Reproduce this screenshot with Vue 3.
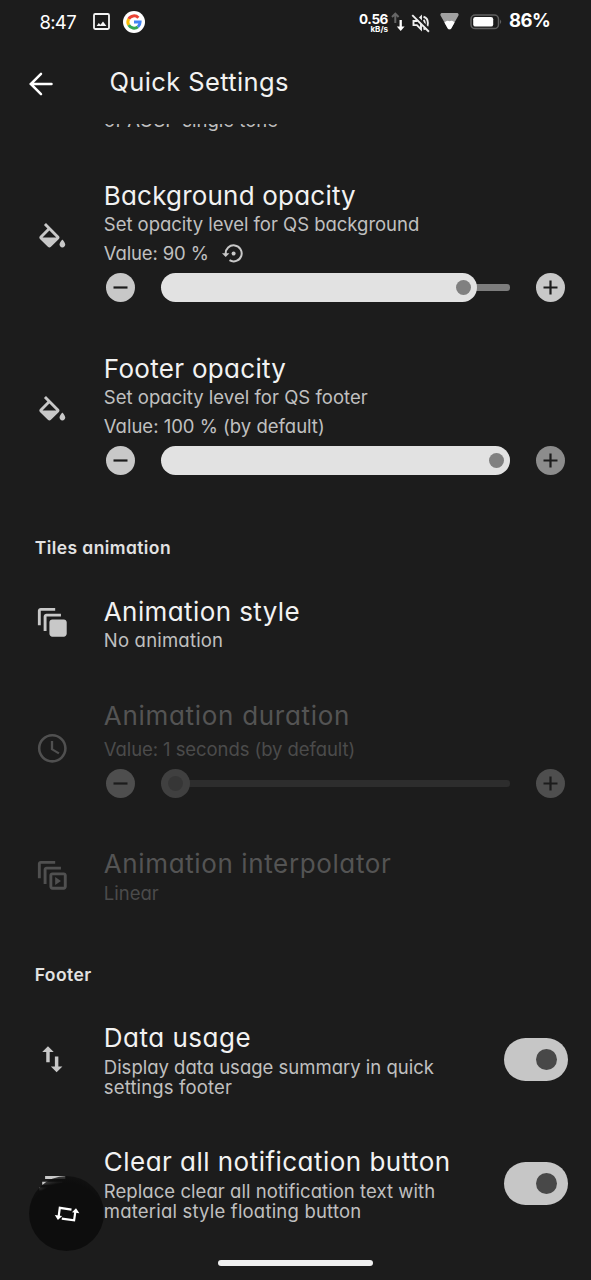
<script setup>
const icons = {
  fill: 'M16.56 8.94L7.62 0 6.21 1.41l2.38 2.38-5.15 5.15c-.59.59-.59 1.54 0 2.12l5.5 5.5c.29.29.68.44 1.06.44s.77-.15 1.06-.44l5.5-5.5c.59-.58.59-1.53 0-2.12zM5.21 10L10 5.21 14.79 10H5.21zM19 11.5s-2 2.17-2 3.5c0 1.1.9 2 2 2s2-.9 2-2c0-1.33-2-3.5-2-3.5z',
  layers: 'M14 2H4c-1.1 0-2 .9-2 2v10h2V4h10V2zm4 4H8c-1.1 0-2 .9-2 2v10h2V8h10V6zm2 4h-8c-1.1 0-2 .9-2 2v8c0 1.1.9 2 2 2h8c1.1 0 2-.9 2-2v-8c0-1.1-.9-2-2-2z',
  clock: 'M11.99 2C6.47 2 2 6.48 2 12s4.47 10 9.99 10C17.52 22 22 17.52 22 12S17.52 2 11.99 2zM12 20.2a8.2 8.2 0 1 1 0-16.4 8.2 8.2 0 0 1 0 16.400zM12.6 7h-1.600v6l5.200 3.200.8-1.300-4.400-2.600z',
  play: 'M14 2H4c-1.1 0-2 .9-2 2v10h2V4h10V2zm4 4H8c-1.1 0-2 .9-2 2v10h2V8h10V6zm2 4h-8c-1.1 0-2 .9-2 2v8c0 1.1.9 2 2 2h8c1.1 0 2-.9 2-2v-8c0-1.1-.9-2-2-2zm0 10h-8v-8h8v8zM14 13.2v5.6l4-2.8z',
  swap: 'M9 3L5 6.990h2.800V14h2.400V6.990H13L9 3zm7.200 14.010V10h-2.400v7.010H11L15 21l4-3.990z',
  clear: 'M5 13h14v-2H5v2zm-2 4h14v-2H3v2zM7 7v2h14V7H7z',
}
const rows = [
  { id: 'bg', icon: 'fill', title: 'Background opacity', lines: ['Set opacity level for QS background'], value: 'Value: 90 %', reset: true, fill: 316 },
  { id: 'foot', icon: 'fill', title: 'Footer opacity', lines: ['Set opacity level for QS footer'], value: 'Value: 100 % (by default)', fill: 349, max: true },
  { id: 'h1', heading: 'Tiles animation' },
  { id: 'style', icon: 'layers', title: 'Animation style', lines: ['No animation'] },
  { id: 'dur', icon: 'clock', title: 'Animation duration', lines: [], value: 'Value: 1 seconds (by default)', fill: 29, off: true },
  { id: 'interp', icon: 'play', title: 'Animation interpolator', lines: ['Linear'], off: true },
  { id: 'h2', heading: 'Footer' },
  { id: 'data', icon: 'swap', title: 'Data usage', lines: ['Display data usage summary in quick', 'settings footer'], toggle: true },
  { id: 'clear', icon: 'clear', title: 'Clear all notification button', lines: ['Replace clear all notification text with', 'material style floating button'], toggle: true },
]
</script>

<template>
  <div class="screen">
    <div class="status">
      <span class="time">8:47</span>
      <svg class="pic" viewBox="0 0 17 17"><rect x="1" y="1" width="15" height="15" rx="1.2" fill="none" stroke="#f4f4f4" stroke-width="1.8" /><path d="M3.600 13l2.200-3 1.700 1.700L10 8.600l3.400 4.400z" fill="#f4f4f4" /></svg>
      <svg class="goog" viewBox="0 0 22 22">
        <circle cx="11" cy="11" r="11" fill="#fff" />
        <g fill="none" stroke-width="3">
          <path d="M15.4 6.7A6.1 6.1 0 0 0 5.7 8" stroke="#ea4335" />
          <path d="M5.7 8a6.1 6.1 0 0 0 0 6.1" stroke="#fbbc05" />
          <path d="M5.7 14.1a6.1 6.1 0 0 0 9.2 1.7" stroke="#34a853" />
          <path d="M14.9 15.8a6.1 6.1 0 0 0 2.2-4.7H11" stroke="#4285f4" />
        </g>
      </svg>
      <div class="net"><b>0.56</b><small>kB/s</small></div>
      <svg class="arrows" viewBox="0 0 14 20"><path d="M4.300 11V2M1 5l3.300-3.400L7.600 5" fill="none" stroke="#666" stroke-width="2" /><path d="M9.700 8v9" fill="none" stroke="#fff" stroke-width="2.300" /><path d="M5.800 14.500h7.800l-3.900 4.500z" fill="#fff" /></svg>
      <svg class="mute" viewBox="0 0 24 24"><path d="M3 9.500h4l5-5v15l-5-5H3z M15 8.500c2 1.500 2 5.500 0 7 M15 4.500c7 2 7 13 0 15" fill="none" stroke="#eee" stroke-width="2.300" /><path d="M3.500 1.500l19 19" stroke="#1c1c1c" stroke-width="3" /><path d="M1.500 2.500l20 20" stroke="#eee" stroke-width="2.300" /></svg>
      <svg class="wifi" viewBox="0 0 19 18" preserveAspectRatio="none">
        <path d="M1.500 0h16q1.800 1.200.8 3L11.200 16.300q-1.700 2-3.400 0L.7 3Q-.3 1.200 1.500 0z" fill="#a0a0a0" />
        <path d="M4.400 10Q7 7.200 9.500 8.800 12.500 7.200 14.600 10L11.200 16.300q-1.700 2-3.400 0z" fill="#fff" />
      </svg>
      <svg class="batt" viewBox="0 0 32 16"><rect x="1" y="1" width="27.500" height="13.600" rx="4.200" fill="none" stroke="#606060" stroke-width="1.500" /><rect x="3.200" y="3" width="20" height="9.600" rx="2.200" fill="#fff" /><path d="M30 5.500q2.400 2.300 0 4.600z" fill="#606060" /></svg>
      <b class="pct">86%</b>
    </div>
    <header>
      <svg class="back" viewBox="0 0 24 24"><path d="M22.500 12H2M12 1.800L1.800 12 12 22.200" fill="none" stroke="#fff" stroke-width="2.500" stroke-linecap="round" /></svg>
      <h1>Quick Settings</h1>
    </header>
    <main>
      <div class="prev">of AOSP single tone</div>
      <template v-for="r in rows" :key="r.id">
        <h3 v-if="r.heading" :class="r.id">{{ r.heading }}</h3>
        <section v-else :class="['row', r.id, { off: r.off }]">
          <svg class="icon" viewBox="0 0 24 24"><path :d="icons[r.icon]" fill-rule="evenodd" /></svg>
          <div class="body">
            <h2>{{ r.title }}</h2>
            <p v-for="l in r.lines" :key="l">{{ l }}</p>
            <div v-if="r.value" class="value">
              <span>{{ r.value }}</span>
              <svg v-if="r.reset" class="reset" viewBox="0 0 21 19"><path d="M3.700 10A8 8 0 1 1 7.500 16.200" fill="none" stroke="#c8c8c8" stroke-width="2" /><path d="M0 9.300h7.400L3.700 13.100z" fill="#c8c8c8" /><circle cx="11.600" cy="9.500" r="2" fill="#c8c8c8" /></svg>
            </div>
            <div v-if="r.fill" class="slider">
              <svg class="btn" viewBox="0 0 29 29"><circle cx="14.500" cy="14.500" r="14.500" /><path d="M7.500 14.500h14" /></svg>
              <div class="track"><div class="level" :style="{ width: r.fill + 'px' }"><i></i></div></div>
              <svg :class="['btn', { max: r.max }]" viewBox="0 0 29 29"><circle cx="14.500" cy="14.500" r="14.500" /><path d="M7.500 14.500h14M14.500 7.500v14" /></svg>
            </div>
          </div>
          <div v-if="r.toggle" class="toggle"><i></i></div>
        </section>
      </template>
    </main>
    <div class="fab">
      <svg viewBox="0 0 26 18"><g fill="none" stroke="#fff" stroke-width="2.200"><path d="M17.500 4.700L5.800 2.800 4.600 12" /><path d="M7.800 13.600l12.300 1.700L21.500 5.500" /></g><path d="M.8 10l7.400 1-4.300 4zM18 7.200l4-4 3.400 5z" fill="#fff" /></svg>
    </div>
    <div class="homebar"></div>
  </div>
</template>

<style>
html, body { margin: 0; background: #1c1c1c; }
</style>

<style scoped>
.screen { position: relative; width: 591px; height: 1280px; overflow: hidden; background: #1c1c1c; color: #c0c0c0; font-family: Inter, "Noto Sans", sans-serif; font-feature-settings: "cv11" 1; display: flex; flex-direction: column; }
svg { display: block; flex: none; }
h1, h2, h3, p { margin: 0; font-weight: 400; white-space: nowrap; }
.status { height: 43px; flex: none; display: flex; align-items: center; color: #fff; padding-left: 39.500px; box-sizing: border-box; }
.time { width: 53.500px; font-size: 18.500px; letter-spacing: -.7px; }
.pic { width: 17px; height: 17px; margin-right: 12.500px; }
.goog { width: 22px; height: 22px; margin-right: 215.500px; }
.net { width: 28px; margin-top: 3px; display: flex; flex-direction: column; align-items: flex-end; white-space: nowrap; }
.net b { font-size: 13.500px; letter-spacing: -.4px; line-height: 12px; }
.net small { font-size: 8px; font-weight: 700; line-height: 8px; }
.arrows { width: 14px; height: 20px; margin-left: 3px; }
.mute { width: 20px; height: 20px; margin-left: 6px; margin-top: 2px; }
.wifi { width: 19px; height: 17px; margin-left: 9px; }
.batt { width: 32px; height: 16px; margin-left: 11px; }
.pct { margin-left: 7px; font-size: 18.500px; letter-spacing: -.5px; line-height: 20px; margin-top: -3px; }
header { height: 81px; flex: none; display: flex; align-items: center; padding-left: 28.500px; box-sizing: border-box; }
.back { width: 24px; height: 24px; }
h1 { margin-left: 57px; margin-top: -4px; font-size: 25.500px; line-height: 32px; letter-spacing: .37px; color: #f2f2f2; }
main { height: 1156px; overflow: hidden; flex: none; display: flex; flex-direction: column; }
.prev { margin: -14px 0 50px 104px; font-size: 18.500px; line-height: 20px; flex: none; }
.row { flex: none; display: flex; align-items: center; padding: 0 23px 0 34.700px; }
.icon { width: 34.600px; height: 34.600px; fill: #c8c8c8; margin: -1px 34.500px 0 0; }
.body { flex: 1; min-width: 0; }
h2 { font-size: 26px; line-height: 32px; color: #f2f2f2; margin-bottom: 2px; }
p, .value { font-size: 18.500px; line-height: 20px; }
.value { display: flex; align-items: center; height: 20px; margin-top: 9px; white-space: nowrap; }
.reset { width: 21px; height: 19px; margin-left: 13px; }
.slider { display: flex; align-items: center; margin: 10px 0 0 2.200px; height: 29px; }
.btn { width: 29px; height: 29px; }
.btn circle { fill: #c8c8c8; }
.btn.max circle { fill: #8c8c8c; }
.btn path { stroke: #1c1c1c; stroke-width: 2.200; fill: none; }
.track { width: 349px; height: 29px; margin: 0 26px; flex: none; position: relative; }
.track::before { content: ""; position: absolute; left: 12px; right: 0; top: 11px; height: 7px; border-radius: 3px; background: #7d7d7d; }
.level { position: relative; height: 29px; border-radius: 15px; background: #e2e2e2; display: flex; align-items: center; justify-content: flex-end; }
.level i { width: 15px; height: 15px; border-radius: 50%; background: #808080; margin-right: 6px; }
.bg h2 { letter-spacing: .2px; }
.bg p { letter-spacing: -.02px; }
.bg .value { letter-spacing: -.13px; }
.foot { margin-top: 51px; }
.foot h2 { letter-spacing: .3px; }
.foot p { letter-spacing: .03px; }
h3 { font-size: 17.500px; line-height: 20px; font-weight: 600; letter-spacing: .42px; color: #e2e2e2; padding-left: 34.700px; flex: none; }
.h1 { margin-top: 63px; }
.style { margin-top: 38px; }
.style h2 { letter-spacing: .4px; }
.style p { letter-spacing: .2px; }
.dur { margin-top: 50px; }
.dur .value { margin-top: 7px; letter-spacing: -.08px; }
.dur h2 { margin-bottom: 0; letter-spacing: .7px; }
.interp { margin-top: 50px; }
.interp h2 { letter-spacing: .62px; }
.h2 { margin-top: 62px; }
.data { margin-top: 37px; }
.data h2 { letter-spacing: .5px; }
.data p + p { letter-spacing: .15px; }
.clear { margin-top: 49px; }
.clear h2 { letter-spacing: .47px; }
.clear p { letter-spacing: .06px; }
.clear p + p { letter-spacing: .2px; }
.interp h2, .data h2, .clear h2 { margin-bottom: 3px; }
.off h2 { color: #545454; }
.off p, .off .value { color: #4b4b4b; }
.off .icon { fill: #505050; }
.off .btn circle { fill: #4e4e4e; }
.off .track::before { background: #2d2d2d; }
.off .level { background: #404040; }
.off .level i { background: #363636; margin-right: 7px; }
.toggle { width: 64px; height: 43px; border-radius: 22px; background: #c6c6c6; display: flex; align-items: center; justify-content: flex-end; flex: none; }
.toggle i { width: 21px; height: 21px; border-radius: 50%; background: #484848; margin-right: 11.500px; }
.fab { position: absolute; left: 29px; top: 1176px; width: 75px; height: 75px; border-radius: 50%; background: radial-gradient(circle at 50% 62%, #0d0d0d 66%, rgba(13, 13, 13, .6) 84%); display: flex; align-items: center; justify-content: center; }
.fab svg { width: 26px; height: 18px; }
.homebar { position: absolute; left: 218px; top: 1260px; width: 155px; height: 6px; border-radius: 3px; background: #f0f0f0; }
</style>
